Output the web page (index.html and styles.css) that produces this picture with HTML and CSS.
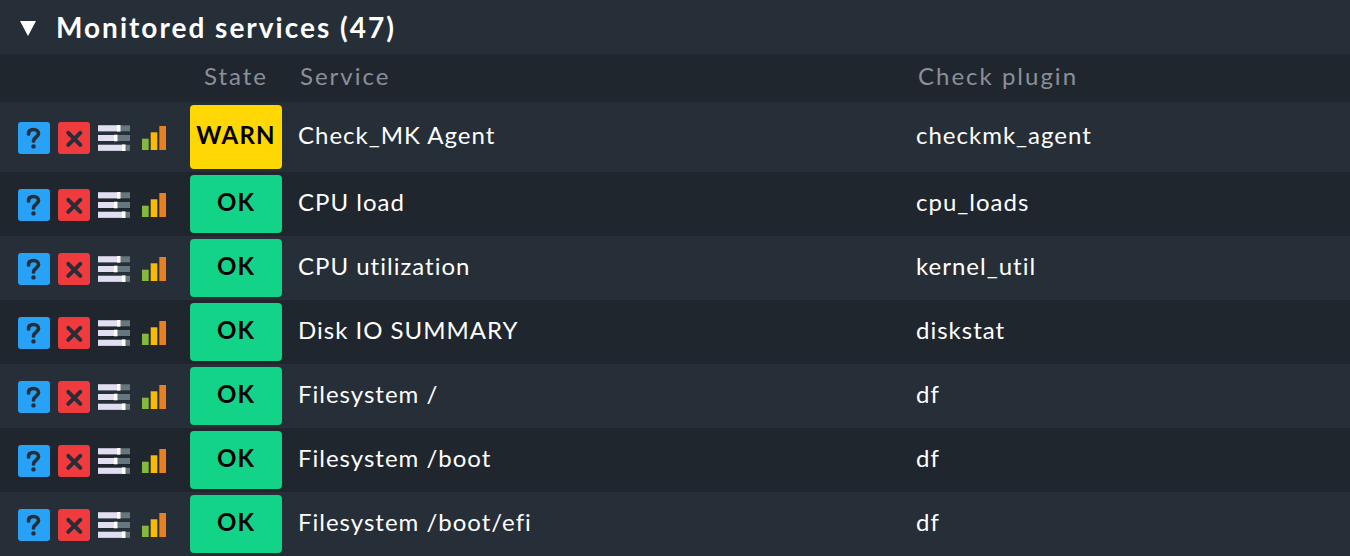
FILE: index.html
```html
<!DOCTYPE html>
<html lang="en">
<head>
<meta charset="utf-8">
<title>Monitored services</title>
<link rel="stylesheet" href="styles.css">
</head>
<body>
<svg class="defs" width="0" height="0" aria-hidden="true">
  <symbol id="i-help" viewBox="0 0 32 32">
    <rect width="32" height="32" rx="3" fill="#27a2f7"/>
    <path d="M10.500 12c0-3.200 2.200-4.500 5-4.500s5 1.600 5 4.100c0 3.700-5 3.700-5 7.400" fill="none" stroke="#262e38" stroke-width="3.700" stroke-linecap="round"/>
    <circle cx="15.500" cy="24.400" r="2.200" fill="#262e38"/>
  </symbol>
  <symbol id="i-del" viewBox="0 0 32 32">
    <rect width="32" height="32" rx="3" fill="#ef3a3e"/>
    <path d="M10.300 10.800l12 12M22.300 10.800l-12 12" fill="none" stroke="#262e38" stroke-width="4" stroke-linecap="round"/>
  </symbol>
  <symbol id="i-param" viewBox="0 0 32 26">
    <rect y="0.300" width="32" height="6" fill="#66777f"/>
    <rect y="0.300" width="20" height="6" fill="#e2def2"/>
    <rect x="19" y="0" width="3.500" height="6.600" fill="#fff"/>
    <rect y="10" width="32" height="6" fill="#66777f"/>
    <rect y="10" width="17" height="6" fill="#e2def2"/>
    <rect x="16" y="9.700" width="3.500" height="6.600" fill="#fff"/>
    <rect y="19.800" width="32" height="6" fill="#66777f"/>
    <rect y="19.800" width="25" height="6" fill="#e2def2"/>
    <rect x="24" y="19.400" width="3.500" height="6.600" fill="#fff"/>
  </symbol>
  <symbol id="i-perf" viewBox="0 0 24 24">
    <rect y="12.700" width="6.700" height="11.300" fill="#84b840"/>
    <rect x="8.700" y="6.300" width="6.600" height="17.700" fill="#fdb900"/>
    <rect x="17.300" y="0" width="6.700" height="24" fill="#e68020"/>
  </symbol>
</svg>
<main class="panel">
  <h2 class="title"><span class="caret"></span>Monitored services (47)</h2>
  <table class="services">
    <thead>
      <tr><th class="c-icons"></th><th class="c-state">State</th><th class="c-service">Service</th><th class="c-plugin">Check plugin</th></tr>
    </thead>
    <tbody>
      <tr class="first">
        <td class="c-icons"><div class="icons"><svg class="ic sq"><use href="#i-help"/></svg><svg class="ic sq"><use href="#i-del"/></svg><svg class="ic pa"><use href="#i-param"/></svg><svg class="ic pe"><use href="#i-perf"/></svg></div></td>
        <td class="c-state"><div class="badge warn">WARN</div></td><td class="c-service">Check_MK Agent</td><td class="c-plugin">checkmk_agent</td>
      </tr>
      <tr>
        <td class="c-icons"><div class="icons"><svg class="ic sq"><use href="#i-help"/></svg><svg class="ic sq"><use href="#i-del"/></svg><svg class="ic pa"><use href="#i-param"/></svg><svg class="ic pe"><use href="#i-perf"/></svg></div></td>
        <td class="c-state"><div class="badge ok">OK</div></td><td class="c-service">CPU load</td><td class="c-plugin">cpu_loads</td>
      </tr>
      <tr>
        <td class="c-icons"><div class="icons"><svg class="ic sq"><use href="#i-help"/></svg><svg class="ic sq"><use href="#i-del"/></svg><svg class="ic pa"><use href="#i-param"/></svg><svg class="ic pe"><use href="#i-perf"/></svg></div></td>
        <td class="c-state"><div class="badge ok">OK</div></td><td class="c-service">CPU utilization</td><td class="c-plugin">kernel_util</td>
      </tr>
      <tr>
        <td class="c-icons"><div class="icons"><svg class="ic sq"><use href="#i-help"/></svg><svg class="ic sq"><use href="#i-del"/></svg><svg class="ic pa"><use href="#i-param"/></svg><svg class="ic pe"><use href="#i-perf"/></svg></div></td>
        <td class="c-state"><div class="badge ok">OK</div></td><td class="c-service">Disk IO SUMMARY</td><td class="c-plugin">diskstat</td>
      </tr>
      <tr>
        <td class="c-icons"><div class="icons"><svg class="ic sq"><use href="#i-help"/></svg><svg class="ic sq"><use href="#i-del"/></svg><svg class="ic pa"><use href="#i-param"/></svg><svg class="ic pe"><use href="#i-perf"/></svg></div></td>
        <td class="c-state"><div class="badge ok">OK</div></td><td class="c-service">Filesystem /</td><td class="c-plugin">df</td>
      </tr>
      <tr>
        <td class="c-icons"><div class="icons"><svg class="ic sq"><use href="#i-help"/></svg><svg class="ic sq"><use href="#i-del"/></svg><svg class="ic pa"><use href="#i-param"/></svg><svg class="ic pe"><use href="#i-perf"/></svg></div></td>
        <td class="c-state"><div class="badge ok">OK</div></td><td class="c-service">Filesystem /boot</td><td class="c-plugin">df</td>
      </tr>
      <tr>
        <td class="c-icons"><div class="icons"><svg class="ic sq"><use href="#i-help"/></svg><svg class="ic sq"><use href="#i-del"/></svg><svg class="ic pa"><use href="#i-param"/></svg><svg class="ic pe"><use href="#i-perf"/></svg></div></td>
        <td class="c-state"><div class="badge ok">OK</div></td><td class="c-service">Filesystem /boot/efi</td><td class="c-plugin">df</td>
      </tr>
    </tbody>
  </table>
</main>
</body>
</html>
```

FILE: styles.css
```css
html, body {
  margin: 0;
  height: 556px;
  overflow: hidden;
  background: #262e38;
}
body {
  font-family: Lato, "Liberation Sans", sans-serif;
  color: #fff;
}
.defs { display: block; height: 0; }
.panel { width: 1350px; }
.title {
  margin: 0;
  height: 54px;
  display: flex;
  align-items: center;
  padding-left: 20px;
  box-sizing: border-box;
  font-size: 28px;
  font-weight: 700;
  letter-spacing: 2px;
  background: #262e38;
}
.caret {
  width: 0;
  height: 0;
  border-left: 8.500px solid transparent;
  border-right: 8.500px solid transparent;
  border-top: 15px solid #fff;
  margin-top: 2px;
  margin-right: 20px;
}
.services {
  width: 1350px;
  table-layout: fixed;
  border-collapse: collapse;
}
.services th {
  height: 48px;
  padding: 0 0 6px;
  box-sizing: border-box;
  background: #20262e;
  color: #8b9098;
  font-size: 24px;
  font-weight: 400;
  letter-spacing: 2px;
  text-align: left;
}
.services td {
  height: 64px;
  padding: 0 0 6px;
  box-sizing: border-box;
  font-size: 24px;
  letter-spacing: 1px;
  color: #fff;
}
.services tbody tr { background: #262e38; }
.services tbody tr:nth-child(even) { background: #20262e; }
.services tr.first td { height: 70px; }
.services td.c-icons { padding: 2px 0 0; }
.services td.c-state { padding: 0; }
.c-icons { width: 190px; }
.c-state { width: 92px; }
.services th.c-state { text-align: center; }
.services th.c-service { padding-left: 18px; }
.services th.c-plugin { padding-left: 2px; }
.c-service { width: 634px; }
.services td.c-service { padding-left: 16px; }
.icons {
  display: flex;
  align-items: center;
  padding-left: 18px;
}
.ic { display: block; flex: none; }
.sq { width: 32px; height: 32px; margin-right: 8px; }
.pa { width: 32px; height: 26px; margin-right: 12px; }
.pe { width: 24px; height: 24px; }
.badge {
  display: flex;
  align-items: center;
  justify-content: center;
  height: 58px;
  border-radius: 4px;
  color: #000;
  font-weight: 700;
  font-size: 24px;
  letter-spacing: 1.200px;
  padding-bottom: 6px;
  box-sizing: border-box;
}
.ok { background: #13d389; }
.warn { background: #ffd703; height: 64px; }
```
